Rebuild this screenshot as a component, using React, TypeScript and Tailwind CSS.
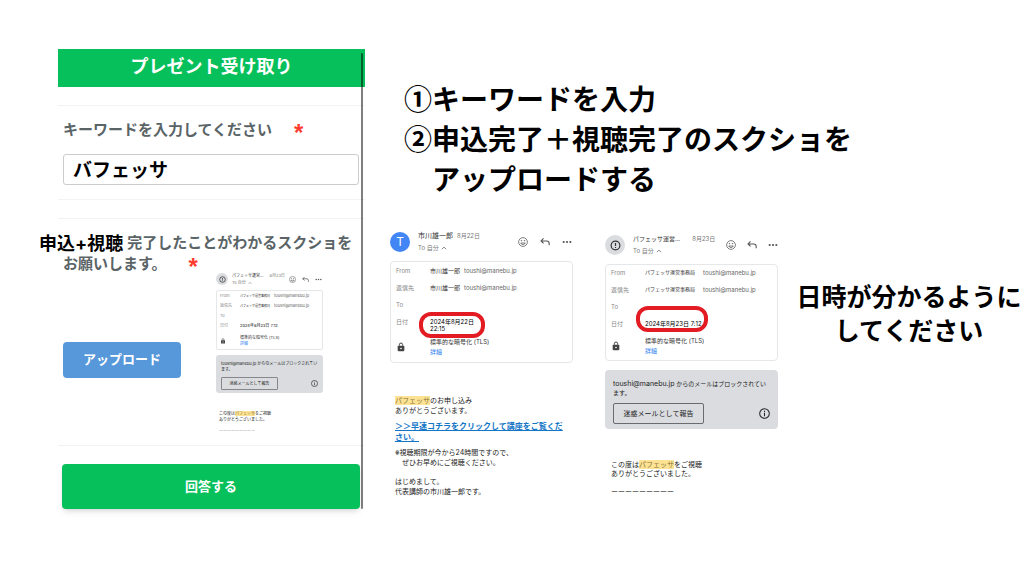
import { ReactNode } from 'react';
import { clsx } from 'clsx';

interface MailStyle {
  header: string;
  names: string;
  name: string;
  date: string;
  small: string;
  avatar: string;
  avatarIcon: string;
  icons: string;
  icon: string;
  card: string;
  row: string;
  term: string;
  sender: string;
  email: string;
  tls: string;
  lock: string;
}

interface MailProps {
  styles: MailStyle;
  initial?: string;
  name: string;
  date: string;
  sender: string;
  sentAt: ReactNode;
  ring?: string;
  children?: ReactNode;
}

const large: MailStyle = {
  header: 'mb-[7px] pr-px',
  names: 'ml-2 leading-[12px]',
  name: 'text-[7px]',
  date: 'text-[6px] ml-1',
  small: 'text-[6px]',
  avatar: 'size-5 text-[12px]',
  avatarIcon: 'size-[11px]',
  icons: 'gap-3',
  icon: 'size-[10px]',
  card: 'rounded-sm px-[5px] pb-[5px]',
  row: 'h-[17px] pt-[5px] leading-[7px]',
  term: 'w-[34px]',
  sender: 'mr-1',
  email: 'text-[6px]',
  tls: 'mt-[7px] leading-[10px]',
  lock: 'size-[10px]',
};

const medium: MailStyle = {
  ...large,
  header: 'mb-[7px]',
  name: 'text-[6px]',
  date: 'text-[6px] ml-3',
  icons: 'gap-[11px]',
  card: 'rounded-sm px-[5px] pb-1',
  row: 'h-[17px] pt-1 leading-[7px]',
  sender: 'text-[5px] mr-2',
  tls: 'mt-[3px] leading-[10px]',
};

const thumb: MailStyle = {
  header: 'mb-1 pr-px',
  names: 'ml-1 leading-[7px]',
  name: 'text-[4px]',
  date: 'text-[4px] ml-1.5',
  small: 'text-[4px]',
  avatar: 'size-3',
  avatarIcon: 'size-[7px]',
  icons: 'gap-1.5',
  icon: 'size-[7px]',
  card: 'rounded-[2px] px-[3px] pb-0.5',
  row: 'h-[10px] pt-[3px] leading-[4px]',
  term: 'w-5',
  sender: 'text-[3px] mr-1',
  email: 'text-[4px]',
  tls: 'mt-1 leading-[6px]',
  lock: 'size-[6px]',
};

const SmileIcon = ({ className }: { className?: string }) => (
  <svg viewBox="0 0 24 24" className={className} fill="none" stroke="currentColor" strokeWidth="1.8">
    <circle cx="12" cy="12" r="10.5" />
    <path d="M6.5 14.500c1 2.300 3 3.500 5.500 3.500s4.500-1.200 5.500-3.500z" />
    <circle cx="8.300" cy="9" r=".8" fill="currentColor" />
    <circle cx="15.700" cy="9" r=".8" fill="currentColor" />
  </svg>
);

const ReplyIcon = ({ className }: { className?: string }) => (
  <svg viewBox="0 0 24 24" className={className} fill="none" stroke="currentColor" strokeWidth="2.600">
    <path d="M8.500 3.500 2.500 9.500l6 6M2.500 9.500H16a6 6 0 0 1 6 6V20" />
  </svg>
);

const DotsIcon = ({ className }: { className?: string }) => (
  <svg viewBox="0 0 24 24" className={className} fill="currentColor">
    <circle cx="4" cy="12" r="2.600" />
    <circle cx="12" cy="12" r="2.600" />
    <circle cx="20" cy="12" r="2.600" />
  </svg>
);

const AlertIcon = ({ className }: { className?: string }) => (
  <svg viewBox="0 0 24 24" className={className} fill="none" stroke="currentColor" strokeWidth="2.600">
    <circle cx="12" cy="12" r="9.500" />
    <path d="M12 6.500v6.500M12 15v2.600" />
  </svg>
);

const InfoIcon = ({ className }: { className?: string }) => (
  <svg viewBox="0 0 24 24" className={className} fill="none" stroke="currentColor" strokeWidth="2.200">
    <circle cx="12" cy="12" r="10.500" />
    <path d="M12 6v2.600M12 10.500V18" />
  </svg>
);

const LockIcon = ({ className }: { className?: string }) => (
  <svg viewBox="0 0 24 24" className={className} fill="none">
    <rect x="4" y="9" width="16" height="13" rx="2" fill="currentColor" />
    <path d="M8 9V6.500a4 4 0 0 1 8 0V9" stroke="currentColor" strokeWidth="2.400" />
    <circle cx="12" cy="15.500" r="2" fill="#fff" />
  </svg>
);

const Chevron = () => (
  <svg viewBox="0 0 10 10" className="inline size-[1em]" fill="none" stroke="currentColor" strokeWidth="1.500">
    <path d="m1.500 7 3.500-3.500L8.500 7" />
  </svg>
);

const Mail = ({ styles: s, initial, name, date, sender, sentAt, ring, children }: MailProps) => (
  <article className="text-[#333]">
    <header className={clsx('flex items-center', s.header)}>
      <div
        className={clsx(
          'flex shrink-0 items-center justify-center rounded-full',
          s.avatar,
          initial ? 'bg-[#4285f4] text-white' : 'bg-[#dadce0] text-[#333]'
        )}
      >
        {initial ?? <AlertIcon className={s.avatarIcon} />}
      </div>
      <div className={clsx('whitespace-nowrap', s.names)}>
        <div className="flex items-center">
          <span className={s.name}>{name}</span>
          <span className={clsx('text-[#777]', s.date)}>{date}</span>
        </div>
        <div className={clsx('flex items-center gap-[2px] text-[#777]', s.small)}>
          To 自分 <Chevron />
        </div>
      </div>
      <div className={clsx('ml-auto flex items-center text-[#555]', s.icons)}>
        <SmileIcon className={s.icon} />
        <ReplyIcon className={s.icon} />
        <DotsIcon className={s.icon} />
      </div>
    </header>

    <dl className={clsx('border border-[#e6e7e9] whitespace-nowrap', s.card, s.small)}>
      {['From', '返信先'].map((label) => (
        <div key={label} className={clsx('flex', s.row)}>
          <dt className={clsx('text-[#888]', s.term)}>{label}</dt>
          <dd className="flex">
            <span className={s.sender}>{sender}</span>
            <span className={clsx('text-[#666]', s.email)}>toushi@manebu.jp</span>
          </dd>
        </div>
      ))}
      <div className={clsx('flex', s.row)}>
        <dt className={clsx('text-[#888]', s.term)}>To</dt>
      </div>
      <div className={clsx('flex', s.row)}>
        <dt className={clsx('text-[#888]', s.term)}>日付</dt>
        <dd className="relative text-black">
          {sentAt}
          {ring && <span className={clsx('absolute border-4 border-[#e31b23]', ring)} />}
        </dd>
      </div>
      <div className={clsx('flex items-center', s.tls)}>
        <dt className={s.term}>
          <LockIcon className={clsx('text-[#444]', s.lock)} />
        </dt>
        <dd>
          <div>標準的な暗号化 (TLS)</div>
          <a href="#" className="block text-[#2f80f0]">
            詳細
          </a>
        </dd>
      </div>
    </dl>
    {children}
  </article>
);

const Highlight = () => <mark className="bg-[#fde293] text-[#857238]">パフェッサ</mark>;

const BlockedMail = ({ small }: { small?: boolean }) => (
  <Mail
    styles={small ? thumb : medium}
    name="パフェッサ運営…"
    date="8月23日"
    sender="パフェッサ運営事務局"
    sentAt="2024年8月23日 7:12"
    ring={small ? undefined : '-left-[9px] -top-[14px] h-[26px] w-[72px] rounded-[12px]'}
  >
    <div
      className={clsx(
        'bg-[#dadce0] text-[#222]',
        small
          ? 'mt-[5px] rounded-[3px] px-[5px] pt-1.5 pb-[3px] text-[4px] leading-[6px]'
          : 'mt-[9px] rounded-sm px-2 pt-[9px] pb-[5px] text-[6px] leading-[9px]'
      )}
    >
      <p className="whitespace-nowrap">
        <span className={small ? 'text-[4px]' : 'text-[7px]'}>toushi@manebu.jp</span> からのメールはブロックされてい
        <br />
        ます。
      </p>
      <div className={clsx('flex items-center justify-between', small ? 'mt-1' : 'mt-1.5')}>
        <button
          type="button"
          className={clsx(
            'border',
            small
              ? 'h-[13px] w-[57px] rounded-[1px] border-[#85878b] text-[4px]'
              : 'h-[21px] w-[91px] rounded-[2px] border-[#696b6f] text-[7px]'
          )}
        >
          迷惑メールとして報告
        </button>
        <InfoIcon className={small ? 'size-[7px]' : 'size-[11px]'} />
      </div>
    </div>
    <div
      className={clsx(
        'whitespace-nowrap text-[#222]',
        small ? 'mt-[18px] px-[3px] text-[4px] leading-[6px]' : 'mt-[31px] px-1.5 text-[7px] leading-[9px]'
      )}
    >
      <p>
        この度は
        <Highlight />
        をご視聴
        <br />
        ありがとうございました。
      </p>
      <p className={clsx('text-[#555]', small ? 'mt-1.5' : 'mt-[9px]')}>ーーーーーーーーー</p>
    </div>
  </Mail>
);

const Required = () => (
  <span className="ml-[22px] pt-1 font-['Liberation_Sans',sans-serif] text-[24px] leading-[15px] text-[#ff3b30]">
    *
  </span>
);

const PresentForm = () => (
  <form className="relative mt-[49px]" onSubmit={(e) => e.preventDefault()}>
    <h1 className="flex h-[38px] items-center justify-center bg-[#06c05b] pb-1 text-[18px] font-bold text-white">
      プレゼント受け取り
    </h1>

    <div className="mt-[18px] border-y border-[#f2f3f4] px-[5px] pt-3.5 pb-[14px]">
      <label htmlFor="keyword" className="flex h-[21px] items-center text-[15px] font-bold text-[#5a6466]">
        キーワードを入力してください
        <Required />
      </label>
      <input
        id="keyword"
        defaultValue="バフェッサ"
        className="mt-[13px] block h-[31px] w-full max-w-[296px] rounded-[3px] border border-[#ccc] px-[9px] pb-0.5 text-[19px] font-bold text-black"
      />
    </div>

    <div className="mt-[18px] border-y border-[#f2f3f4] px-[5px] pt-3.5 pb-[10px]">
      <p className="-ml-6 flex h-[21px] items-center gap-1 text-[15px] font-bold whitespace-nowrap text-[#5a6466]">
        <span className="text-[18px] text-black">申込+視聴</span>
        完了したことがわかるスクショを
      </p>
      <div className="flex">
        <div className="w-[153px]">
          <p className="flex h-[21px] items-center text-[15px] font-bold text-[#5a6466]">
            お願いします。
            <Required />
          </p>
          <button
            type="button"
            className="mt-[67px] h-9 w-[118px] rounded-[4px] bg-[#5698da] text-[13px] font-bold text-white"
          >
            アップロード
          </button>
        </div>
        <div className="mt-[18px] w-[107px]">
          <BlockedMail small />
        </div>
      </div>
    </div>

    <div className="mt-[18px] pr-[5px] pl-1">
      <button
        type="submit"
        className="h-[45px] w-full rounded-[4px] bg-[#06c05b] text-[13px] font-bold text-white shadow-md"
      >
        回答する
      </button>
    </div>

    {/* scroll indicator over the right edge */}
    <div className="absolute top-1 right-[2px] bottom-0 w-[2px] rounded-full bg-black/50" />
  </form>
);

export default function App() {
  return (
    <main className="grid grid-cols-[307fr_659fr] overflow-x-hidden bg-white pb-12 pl-[58px] font-[Inter,'Noto_Sans_CJK_JP',sans-serif]">
      <PresentForm />

      <section className="pl-[25px]">
        <ol className="mt-[78px] pl-[14px] font-['Noto_Sans_CJK_JP',sans-serif] text-[28px] leading-[40px] font-bold whitespace-nowrap text-black">
          <li>①キーワードを入力</li>
          <li>
            ②申込完了＋視聴完了のスクショを
            <br />
            <span className="pl-[28px]">アップロードする</span>
          </li>
        </ol>

        <div className="mt-8 grid grid-cols-[215fr_173fr_246fr]">
          <div className="pr-8">
            <Mail
              styles={large}
              initial="T"
              name="市川雄一郎"
              date="8月22日"
              sender="市川雄一郎"
              sentAt={
                <>
                  2024年8月22日
                  <br />
                  22:15
                </>
              }
              ring="-left-[11px] -top-[6px] h-[26px] w-[66px] rounded-[12px]"
            >
              <div className="mt-[33px] px-[5px] text-[7px] leading-[10px] whitespace-nowrap text-[#222]">
                <p>
                  <Highlight />
                  のお申し込み
                  <br />
                  ありがとうございます。
                </p>
                <a href="#" className="my-[5px] block text-[8px] leading-[11px] font-bold text-[#1476c6] underline">
                  ＞＞早速コチラをクリックして講座をご覧くだ
                  <br />
                  さい。
                </a>
                <p>
                  ※視聴期限が今から24時間ですので、
                  <br />
                  <span className="pl-[7px]">ぜひお早めにご視聴ください。</span>
                </p>
                <p className="mt-[9px]">
                  はじめまして。
                  <br />
                  代表講師の市川雄一郎です。
                </p>
              </div>
            </Mail>
          </div>

          <div className="mt-[3px]">
            <BlockedMail />
          </div>

          <p className="mt-12 pl-4 text-center font-['Noto_Sans_CJK_JP',sans-serif] text-[25px] leading-[34px] font-bold whitespace-nowrap text-black">
            日時が分かるように
            <br />
            してください
          </p>
        </div>
      </section>
    </main>
  );
}
